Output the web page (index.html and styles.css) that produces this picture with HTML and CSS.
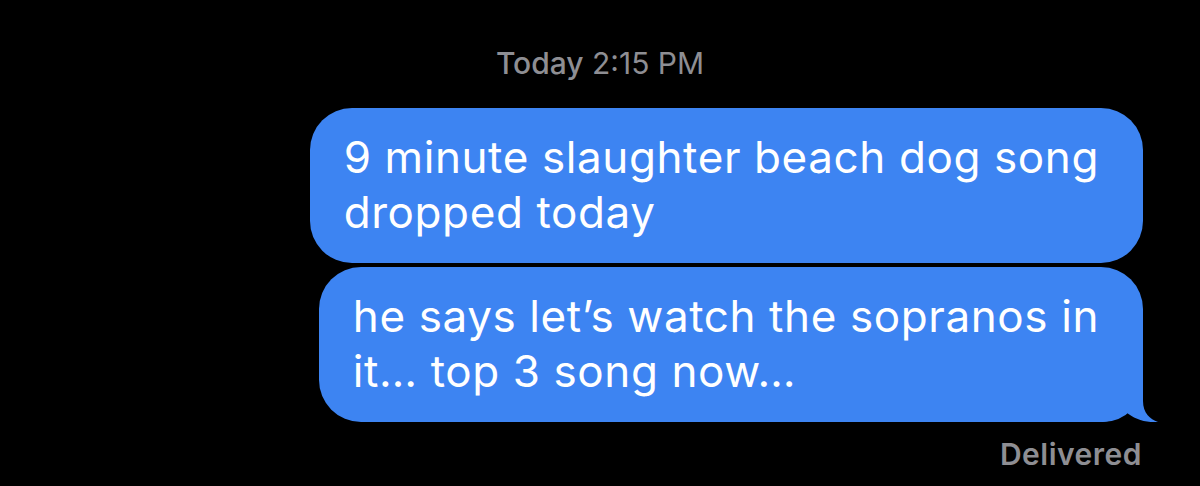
FILE: index.html
```html
<!DOCTYPE html>
<html>
<head>
<meta charset="utf-8">
<link rel="stylesheet" href="styles.css">
</head>
<body>
<main class="thread">
  <div class="timestamp"><span class="day">Today</span> 2:15 PM</div>
  <div class="messages">
    <div class="bubble first">9 minute slaughter beach dog song<br>dropped today</div>
    <div class="bubble last">he says let’s watch the sopranos in<br>it… top 3 song now…
      <svg class="tail" width="60" height="50" viewBox="0 0 60 50"><path d="M45 0 L45 29 C45 41 52 47 60 50 C48 51 36 47 28 40 C20 47 12 50 0 50 L0 0 Z" fill="#3d84f2"/></svg>
    </div>
  </div>
  <div class="status">Delivered</div>
</main>
</body>
</html>
```
FILE: styles.css
```css
html, body {
  margin: 0;
  padding: 0;
  background: #000;
}
body {
  width: 1200px;
  height: 486px;
  overflow: hidden;
  font-family: Inter, "Liberation Sans", sans-serif;
}
.thread {
  display: flex;
  flex-direction: column;
  padding-top: 45px;
}
.timestamp {
  text-align: center;
  color: #8e8e93;
  font-size: 30px;
  line-height: 36px;
  margin-bottom: 27px;
}
.timestamp .day {
  font-weight: 500;
}
.messages {
  display: flex;
  flex-direction: column;
  align-items: flex-end;
  gap: 4px;
  padding-right: 57px;
}
.bubble {
  position: relative;
  background: #3d84f2;
  color: #fff;
  font-size: 44px;
  letter-spacing: 0.6px;
  line-height: 55px;
  white-space: nowrap;
  border-radius: 42px;
  padding: 22px 44px 23px 34px;
}
.bubble .tail {
  position: absolute;
  right: -15px;
  bottom: 0;
}
.bubble.last {
  border-bottom-right-radius: 40px;
}
.status {
  align-self: flex-end;
  padding-right: 58px;
  margin-top: 14px;
  color: #8e8e93;
  font-size: 30px;
  letter-spacing: 0.5px;
  font-weight: 600;
  line-height: 36px;
}
```
